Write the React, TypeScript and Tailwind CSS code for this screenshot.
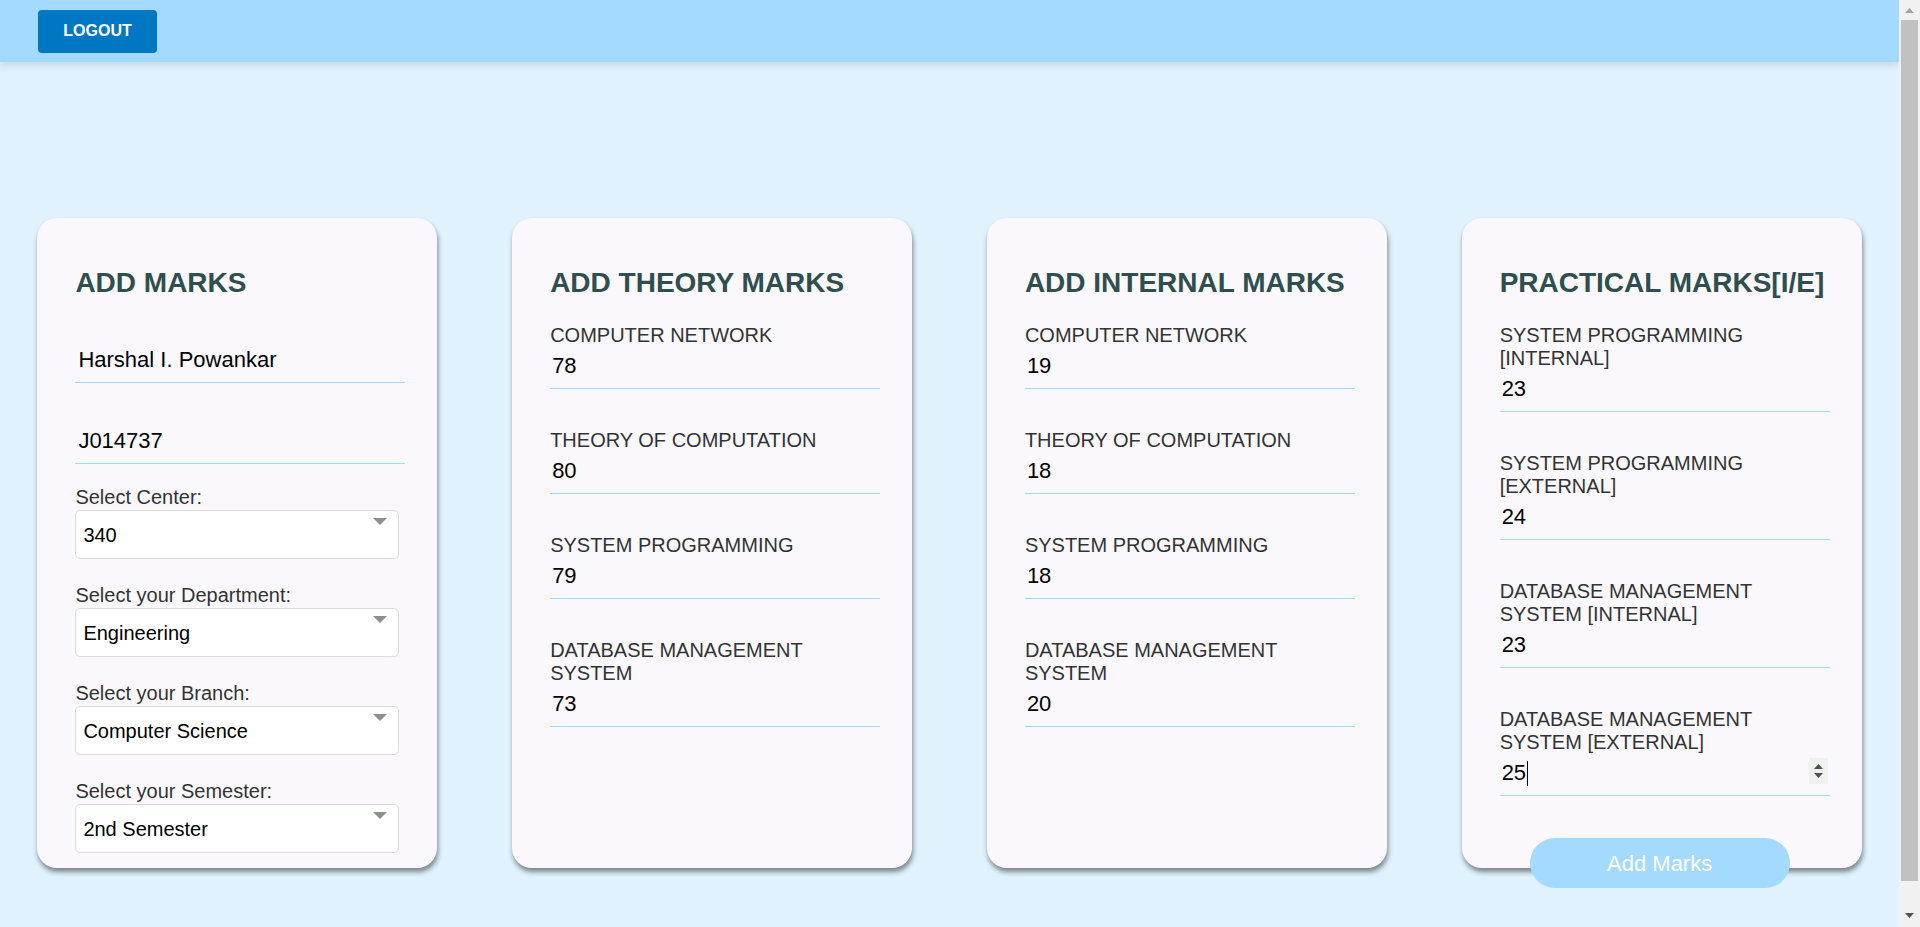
import { useState } from "react";

const theory = [
  { label: "COMPUTER NETWORK", value: "78" },
  { label: "THEORY OF COMPUTATION", value: "80" },
  { label: "SYSTEM PROGRAMMING", value: "79" },
  { label: "DATABASE MANAGEMENT SYSTEM", value: "73" },
];

const internal = [
  { label: "COMPUTER NETWORK", value: "19" },
  { label: "THEORY OF COMPUTATION", value: "18" },
  { label: "SYSTEM PROGRAMMING", value: "18" },
  { label: "DATABASE MANAGEMENT SYSTEM", value: "20" },
];

const practical = [
  { label: "SYSTEM PROGRAMMING [INTERNAL]", value: "23" },
  { label: "SYSTEM PROGRAMMING [EXTERNAL]", value: "24" },
  { label: "DATABASE MANAGEMENT SYSTEM [INTERNAL]", value: "23" },
  { label: "DATABASE MANAGEMENT SYSTEM [EXTERNAL]", value: "25" },
];

const selects = [
  { label: "Select Center:", value: "340" },
  { label: "Select your Department:", value: "Engineering" },
  { label: "Select your Branch:", value: "Computer Science" },
  { label: "Select your Semester:", value: "2nd Semester" },
];

function Card({ title, children }: { title: string; children: React.ReactNode }) {
  return (
    <div className="w-[400px] h-[650px] shrink-0 rounded-[20px] bg-[#faf8fc] pl-[38px] pt-[49px] shadow-[1px_4px_5px_rgba(0,0,0,0.45)]">
      <h2 className="text-[28px] leading-[32px] font-bold text-[#2f4f4f]">{title}</h2>
      {children}
    </div>
  );
}

function MarkField({
  label,
  value,
  first,
  spinner,
}: {
  label: string;
  value: string;
  first?: boolean;
  spinner?: boolean;
}) {
  const [val, setVal] = useState(value);
  return (
    <div className={first ? "mt-[25px] w-[330px]" : "mt-[40px] w-[330px]"}>
      <label className="block text-[20px] leading-[23px] text-[#333]">{label}</label>
      <div className="relative">
        <input
          type="text"
          value={val}
          onChange={(e) => setVal(e.target.value)}
          className="block w-[330px] pl-[2px] pt-[6px] pb-[10px] text-[22px] leading-[25px] text-black border-b border-[#a3d9fc] outline-none bg-transparent"
        />
        {spinner && (
          <>
            <span className="absolute left-[27px] top-[7px] w-[1px] h-[25px] bg-black" />
            <div className="absolute right-[2px] top-[4px] w-[19px] h-[26px] bg-[#f0f0f0] flex flex-col items-center justify-center gap-[4px]">
              <svg width="9" height="5" viewBox="0 0 9 5">
                <path d="M0 5 L4.5 0 L9 5 Z" fill="#505050" />
              </svg>
              <svg width="9" height="5" viewBox="0 0 9 5">
                <path d="M0 0 L9 0 L4.5 5 Z" fill="#505050" />
              </svg>
            </div>
          </>
        )}
      </div>
    </div>
  );
}

function Scrollbar() {
  return (
    <div className="w-[21px] h-[927px] shrink-0 bg-[#f1f1f1] flex flex-col">
      <div className="h-[20px] flex items-center justify-center">
        <svg width="9" height="5" viewBox="0 0 9 5">
          <path d="M0 5 L4.5 0 L9 5 Z" fill="#a3a3a3" />
        </svg>
      </div>
      <div className="h-[861px] mx-[2px] bg-[#c1c1c1]" />
      <div className="flex-1" />
      <div className="h-[21px] flex items-start justify-center pt-[7px]">
        <svg width="9" height="5" viewBox="0 0 9 5">
          <path d="M0 0 L9 0 L4.5 5 Z" fill="#505050" />
        </svg>
      </div>
    </div>
  );
}

export default function App() {
  const [name, setName] = useState("Harshal I. Powankar");
  const [roll, setRoll] = useState("J014737");

  return (
    <div className="flex h-[927px] overflow-hidden bg-[#e0f2fd] font-['Liberation_Sans',Arial,sans-serif]">
      <div className="flex-1 min-w-0 pb-[93px]">
        <header className="h-[62px] bg-[#a2d9fd] shadow-[0_3px_8px_rgba(0,0,0,0.12)] flex items-center pl-[38px]">
          <button className="h-[43px] w-[119px] rounded-[4px] bg-[#0077c2] text-white font-bold text-[16px]">
            LOGOUT
          </button>
        </header>

        <main className="flex justify-around pt-[156px]">
          <Card title="ADD MARKS">
            <input
              type="text"
              value={name}
              onChange={(e) => setName(e.target.value)}
              className="block mt-[43px] w-[330px] pl-[3px] pt-[5px] pb-[10px] text-[22px] leading-[25px] text-black border-b border-[#a3d9fc] outline-none bg-transparent"
            />
            <input
              type="text"
              value={roll}
              onChange={(e) => setRoll(e.target.value)}
              className="block mt-[40px] w-[330px] pl-[3px] pt-[5px] pb-[10px] text-[22px] leading-[25px] text-black border-b border-[#a3d9fc] outline-none bg-transparent"
            />
            <div className="mt-[22px]">
              {selects.map((s, i) => (
                <div key={s.label} className={i === 0 ? "" : "mt-[25px]"}>
                  <label className="block text-[20px] leading-[23px] text-[#333]">{s.label}</label>
                  <div className="relative mt-[1px] w-[324px]">
                    <select
                      defaultValue={s.value}
                      className="block w-[324px] h-[49px] appearance-none rounded-[5px] border border-[#dcdcdc] bg-white pl-[7px] text-[20px] text-black outline-none"
                    >
                      <option>{s.value}</option>
                    </select>
                    <svg
                      className="absolute right-[12px] top-[8px] pointer-events-none"
                      width="14"
                      height="7"
                      viewBox="0 0 14 7"
                    >
                      <path d="M0 0 L14 0 L7 7 Z" fill="#8f8f8f" />
                    </svg>
                  </div>
                </div>
              ))}
            </div>
          </Card>

          <Card title="ADD THEORY MARKS">
            {theory.map((f, i) => (
              <MarkField key={f.label} label={f.label} value={f.value} first={i === 0} />
            ))}
          </Card>

          <Card title="ADD INTERNAL MARKS">
            {internal.map((f, i) => (
              <MarkField key={f.label} label={f.label} value={f.value} first={i === 0} />
            ))}
          </Card>

          <Card title="PRACTICAL MARKS[I/E]">
            {practical.map((f, i) => (
              <MarkField
                key={f.label}
                label={f.label}
                value={f.value}
                first={i === 0}
                spinner={i === practical.length - 1}
              />
            ))}
            <button className="mt-[42px] ml-[30px] w-[260px] h-[50px] rounded-full bg-[#a3dafd] text-white text-[22px]">
              Add Marks
            </button>
          </Card>
        </main>
      </div>
      <Scrollbar />
    </div>
  );
}
